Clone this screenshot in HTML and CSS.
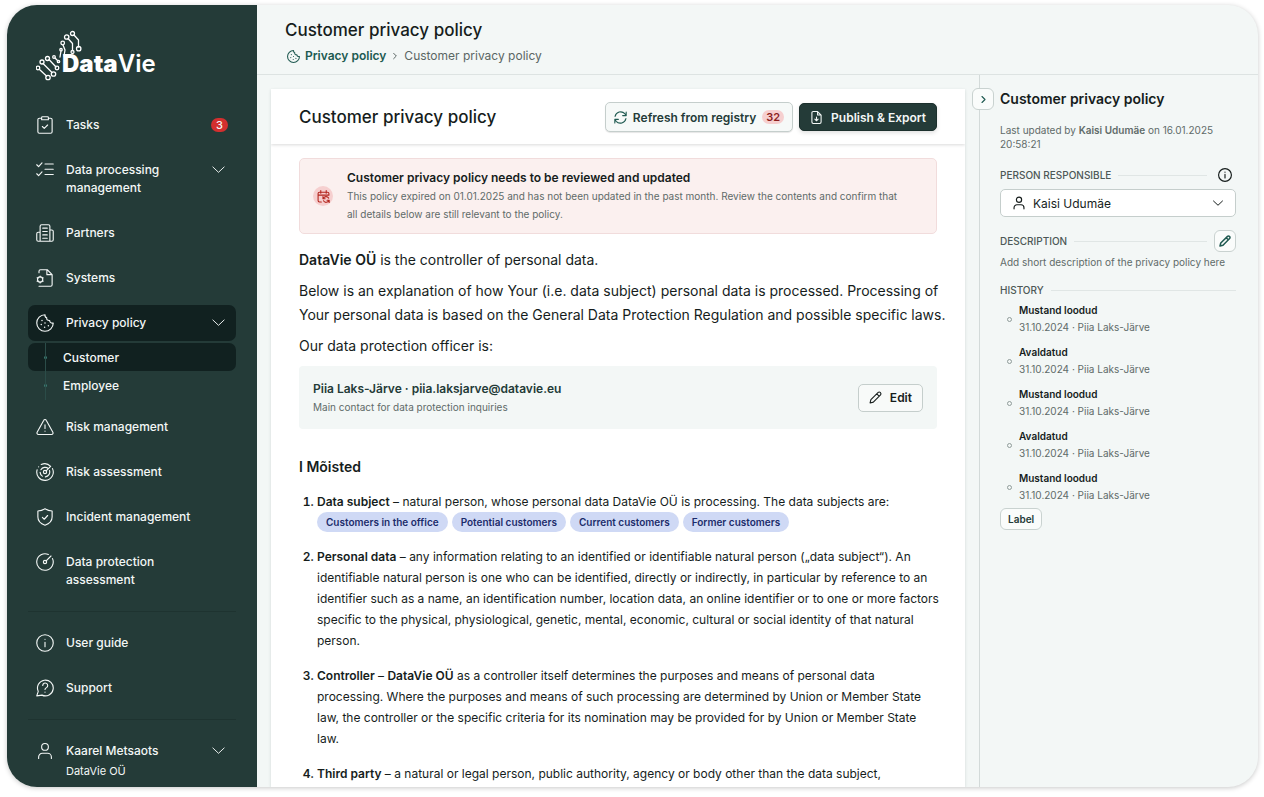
FILE: index.html
```html
<!DOCTYPE html>
<html lang="en">
<head>
    <meta charset="utf-8">
    <title>DataVie - Customer privacy policy</title>
    <link rel="stylesheet" href="styles.css">
</head>
<body>
    <svg class="sprite" aria-hidden="true">
        <symbol id="chevron-down" viewBox="0 0 24 24"><path d="M3 8l9 8.5 9-8.5"/></symbol>
        <symbol id="chevron-right" viewBox="0 0 24 24"><path d="M8 4l8 8-8 8"/></symbol>
        <symbol id="user" viewBox="0 0 24 24"><circle cx="12" cy="6.5" r="4.5"/><path d="M3.5 22v-2a5 5 0 0 1 5-5h7a5 5 0 0 1 5 5v2"/></symbol>
        <symbol id="cookie" viewBox="0 0 24 24"><path d="M12 1a11 11 0 1 0 11 11c-2.5.6-4.8-.8-4.8-3.3-2.8.3-4.4-1.2-3.9-3.7C12.5 4.5 11.7 3 12 1z"/><path d="M8 8.5v.01M7 14v.01M12 12v.01M11.5 17.5v.01M16.5 15.5v.01" stroke-width="2"/></symbol>
        <symbol id="info" viewBox="0 0 24 24"><circle cx="12" cy="12" r="11"/><path d="M12 11v6M12 7v.1"/></symbol>
        <symbol id="pencil" viewBox="0 0 24 24"><path d="M2 22l1.5-6L17 2.7a2.6 2.6 0 0 1 3.7 0l.6.6a2.6 2.6 0 0 1 0 3.7L8 20.5zM14.5 5.5l4 4"/></symbol>
    </svg>

    <div class="app">
        <aside class="sidebar">
            <a href="#" class="logo" aria-label="DataVie">
                <svg width="122" height="52" viewBox="0 0 122 52">
                    <g class="logo-strand">
                        <path d="M3.5 39.5l7 6.5M7 33.5l9 9M13 29.5l7 7.5M19 28l3 3M27 15l2 5-1 6M32 8.5l4.5 5v7M38 5l4.5 5v7M25 21l-1 6"/>
                        <circle cx="2" cy="38" r="1.8"/><circle cx="6" cy="32" r="2"/><circle cx="11.5" cy="28.5" r="2"/><circle cx="18" cy="27" r="1.3"/>
                        <circle cx="12" cy="47.5" r="2.2"/><circle cx="17.5" cy="44" r="2.2"/><circle cx="21" cy="38" r="1.8"/><circle cx="22.5" cy="31.5" r="1.2"/>
                        <circle cx="25" cy="19.7" r="1.2"/><circle cx="26.7" cy="13" r="1.8"/><circle cx="30.7" cy="7" r="2.2"/><circle cx="36.5" cy="3.5" r="2"/>
                        <circle cx="42.7" cy="18.7" r="2.2"/><circle cx="36.5" cy="22" r="1.5"/>
                    </g>
                    <text x="26" y="42" class="logo-text"><tspan class="logo-heavy">Data</tspan>Vie</text>
                </svg>
            </a>

            <nav class="menu">
                <a href="#" class="menu-item">
                    <svg class="icon" viewBox="0 0 24 24"><path d="M7.5 3H4.5a2 2 0 0 0-2 2v16a2 2 0 0 0 2 2h15a2 2 0 0 0 2-2V5a2 2 0 0 0-2-2h-3M8.5 1h7a1 1 0 0 1 1 1v3h-9V2a1 1 0 0 1 1-1zM8.5 14l2.5 2.5 4.5-4.5"/></svg>
                    <span>Tasks</span>
                    <span class="count">3</span>
                </a>
                <a href="#" class="menu-item">
                    <svg class="icon" viewBox="0 0 24 24"><path d="M1 5l2.5 2.5L8 2.5M1 17l2.5 2.5L8 14.5M12 4h11M12 11h11M12 18h11"/></svg>
                    <span>Data processing management</span>
                    <svg class="arrow"><use href="#chevron-down"/></svg>
                </a>
                <a href="#" class="menu-item">
                    <svg class="icon" viewBox="0 0 24 24"><path d="M5.5 23V3a2 2 0 0 1 2-2h9a2 2 0 0 1 2 2v20zM5.5 11H3a2 2 0 0 0-2 2v8a2 2 0 0 0 2 2h2.5M18.5 8H21a2 2 0 0 1 2 2v11a2 2 0 0 1-2 2h-2.5M9 5.5h6M9 10h6M9 14.5h6M9 19h6"/></svg>
                    <span>Partners</span>
                </a>
                <a href="#" class="menu-item">
                    <svg class="icon" viewBox="0 0 24 24"><path d="M4 5V3a2 2 0 0 1 2-2h9l6.5 6.5V21a2 2 0 0 1-2 2H4M14.5 1v6.5h7"/><circle cx="5.5" cy="14" r="3.5"/><path d="M5.5 9.5v1M5.5 17.5v1M1.5 11.7l1 .6M8.5 15.7l1 .6M1.5 16.3l1-.6M8.5 12.3l1-.6"/></svg>
                    <span>Systems</span>
                </a>
                <div class="menu-group">
                    <a href="#" class="menu-item active">
                        <svg class="icon"><use href="#cookie"/></svg>
                        <span>Privacy policy</span>
                        <svg class="arrow"><use href="#chevron-down"/></svg>
                    </a>
                    <div class="submenu">
                        <a href="#" class="submenu-item active">Customer</a>
                        <a href="#" class="submenu-item">Employee</a>
                    </div>
                </div>
                <a href="#" class="menu-item">
                    <svg class="icon" viewBox="0 0 24 24"><path d="M10.2 3.2L1.5 19a2 2 0 0 0 1.8 3h17.4a2 2 0 0 0 1.8-3L13.8 3.2a2 2 0 0 0-3.6 0zM12 9v5M12 17.5v.1"/></svg>
                    <span>Risk management</span>
                </a>
                <a href="#" class="menu-item">
                    <svg class="icon" viewBox="0 0 24 24"><path d="M19.5 4.5A11 11 0 0 0 7 2M3.5 5v.1M1.5 9a11 11 0 1 0 20.5-1.5M16.5 7.5A6.5 6.5 0 0 0 6.5 9M5.5 12.5a6.5 6.5 0 0 0 3 5M12.5 18.5a6.5 6.5 0 0 0 5.5-8.5M13.5 10.5l6-6"/><circle cx="12" cy="12" r="2.2"/></svg>
                    <span>Risk assessment</span>
                </a>
                <a href="#" class="menu-item">
                    <svg class="icon" viewBox="0 0 24 24"><path d="M12 1c3 2 6 3 9.5 3v8c0 5.5-4 9-9.5 11-5.5-2-9.5-5.5-9.5-11V4C6 4 9 3 12 1zM8.5 12.5l2.5 2.5 4.5-5"/></svg>
                    <span>Incident management</span>
                </a>
                <a href="#" class="menu-item">
                    <svg class="icon" viewBox="0 0 24 24"><path d="M16.5 2a11 11 0 1 0 5.5 5.5M13.5 10.5L20 4"/><circle cx="12" cy="12" r="2.2"/></svg>
                    <span>Data protection assessment</span>
                </a>
                <hr class="divider">
                <a href="#" class="menu-item">
                    <svg class="icon"><use href="#info"/></svg>
                    <span>User guide</span>
                </a>
                <a href="#" class="menu-item">
                    <svg class="icon" viewBox="0 0 24 24"><path d="M1 22.5l2-6A10.5 10.5 0 1 1 8 21.5zM9 8.5a3.3 3.3 0 1 1 5 3c-1.5.8-2 1.3-2 2.5M12 17.5v.1"/></svg>
                    <span>Support</span>
                </a>
                <hr class="divider">
                <a href="#" class="menu-item">
                    <svg class="icon"><use href="#user"/></svg>
                    <span>Kaarel Metsaots <small class="company">DataVie OÜ</small></span>
                    <svg class="arrow"><use href="#chevron-down"/></svg>
                </a>
            </nav>
        </aside>

        <div class="page">
            <header class="page-header">
                <h1 class="title">Customer privacy policy</h1>
                <nav class="breadcrumb">
                    <svg class="icon-sm"><use href="#cookie"/></svg>
                    <a href="#">Privacy policy</a>
                    <svg class="separator"><use href="#chevron-right"/></svg>
                    <span>Customer privacy policy</span>
                </nav>
            </header>

            <div class="columns">
                <main class="document">
                    <div class="document-header">
                        <h2 class="title">Customer privacy policy</h2>
                        <button class="btn btn-light">
                            <svg class="icon-sm" viewBox="0 0 24 24"><path d="M22.5 2v6.5H16M1.5 22v-6.5H8M2 10A10.5 10.5 0 0 1 20 5l2.5 3.5M1.5 15.5L4 19a10.5 10.5 0 0 0 18-5"/></svg>
                            Refresh from registry
                            <span class="badge">32</span>
                        </button>
                        <button class="btn btn-dark">
                            <svg class="icon-sm" viewBox="0 0 24 24"><path d="M14 1H6a2.5 2.5 0 0 0-2.5 2.5v17A2.5 2.5 0 0 0 6 23h12a2.5 2.5 0 0 0 2.5-2.5v-13zM14 1v6.5h6.5M12 11v7M9 15l3 3 3-3"/></svg>
                            Publish &amp; Export
                        </button>
                    </div>

                    <div class="document-body">
                        <div class="alert">
                            <span class="alert-icon">
                                <svg viewBox="0 0 24 24"><path d="M8 22H4.5A2.5 2.5 0 0 1 2 19.5v-13A2.5 2.5 0 0 1 4.5 4h15A2.5 2.5 0 0 1 22 6.5V9M2 9.5h20M7 1v5M17 1v5M11 12v4h4M22.5 23v-4h-4M11.5 16a5.5 5.5 0 0 1 10-1M22 19a5.5 5.5 0 0 1-10 1"/></svg>
                            </span>
                            <div>
                                <h3 class="alert-title">Customer privacy policy needs to be reviewed and updated</h3>
                                <p class="alert-text">This policy expired on 01.01.2025 and has not been updated in the past month. Review the contents and confirm that all details below are still relevant to the policy.</p>
                            </div>
                        </div>

                        <div class="intro">
                            <p><b>DataVie OÜ</b> is the controller of personal data.</p>
                            <p>Below is an explanation of how Your (i.e. data subject) personal data is processed. Processing of Your personal data is based on the General Data Protection Regulation and possible specific laws.</p>
                            <p>Our data protection officer is:</p>
                        </div>

                        <div class="officer">
                            <div>
                                <div class="officer-name">Piia Laks-Järve · piia.laksjarve@datavie.eu</div>
                                <div class="officer-note">Main contact for data protection inquiries</div>
                            </div>
                            <button class="btn btn-outline">
                                <svg class="icon-sm"><use href="#pencil"/></svg>
                                Edit
                            </button>
                        </div>

                        <h3 class="section-title">I Mõisted</h3>
                        <ol class="terms">
                            <li>
                                <b>Data subject</b> – natural person, whose personal data DataVie OÜ is processing. The data subjects are:
                                <div class="tags">
                                    <span class="tag">Customers in the office</span>
                                    <span class="tag">Potential customers</span>
                                    <span class="tag">Current customers</span>
                                    <span class="tag">Former customers</span>
                                </div>
                            </li>
                            <li><b>Personal data</b> – any information relating to an identified or identifiable natural person („data subject“). An identifiable natural person is one who can be identified, directly or indirectly, in particular by reference to an identifier such as a name, an identification number, location data, an online identifier or to one or more factors specific to the physical, physiological, genetic, mental, economic, cultural or social identity of that natural person.</li>
                            <li><b>Controller</b> – <b>DataVie OÜ</b> as a controller itself determines the purposes and means of personal data processing. Where the purposes and means of such processing are determined by Union or Member State law, the controller or the specific criteria for its nomination may be provided for by Union or Member State law.</li>
                            <li><b>Third party</b> – a natural or legal person, public authority, agency or body other than the data subject,</li>
                        </ol>
                    </div>
                </main>

                <aside class="details">
                    <button class="btn-icon collapse" aria-label="Collapse"><svg><use href="#chevron-right"/></svg></button>
                    <h2 class="details-title">Customer privacy policy</h2>
                    <p class="updated">Last updated by <b>Kaisi Udumäe</b> on 16.01.2025 20:58:21</p>

                    <div class="label-row">
                        <label for="person">PERSON RESPONSIBLE</label>
                        <button class="info-btn" aria-label="Info"><svg><use href="#info"/></svg></button>
                    </div>
                    <div class="select-box">
                        <svg><use href="#user"/></svg>
                        <select id="person"><option>Kaisi Udumäe</option></select>
                        <svg class="select-arrow"><use href="#chevron-down"/></svg>
                    </div>

                    <div class="label-row">
                        <span>DESCRIPTION</span>
                        <button class="btn-icon" aria-label="Edit description"><svg><use href="#pencil"/></svg></button>
                    </div>
                    <p class="description">Add short description of the privacy policy here</p>

                    <div class="label-row history-label"><span>HISTORY</span></div>
                    <ul class="history">
                        <li><b>Mustand loodud</b><span>31.10.2024 · Piia Laks-Järve</span></li>
                        <li><b>Avaldatud</b><span>31.10.2024 · Piia Laks-Järve</span></li>
                        <li><b>Mustand loodud</b><span>31.10.2024 · Piia Laks-Järve</span></li>
                        <li><b>Avaldatud</b><span>31.10.2024 · Piia Laks-Järve</span></li>
                        <li><b>Mustand loodud</b><span>31.10.2024 · Piia Laks-Järve</span></li>
                    </ul>
                    <button class="label-btn">Label</button>
                </aside>
            </div>
        </div>
    </div>
</body>
</html>
```
FILE: styles.css
```css
*, *::before, *::after {
    box-sizing: border-box;
}
body {
    margin: 0;
    padding: 5px 6px 10px 7px;
    height: 100vh;
    background: #fff;
    color: #161d1c;
    font-family: Inter, "Liberation Sans", sans-serif;
    font-size: 12px;
}
h1, h2, h3, p, ul, ol {
    margin: 0;
    padding: 0;
}
b {
    font-weight: 600;
}
a {
    color: inherit;
    text-decoration: none;
}
button, select {
    font: inherit;
    color: inherit;
    cursor: pointer;
}
svg {
    fill: none;
    stroke: currentColor;
    stroke-width: 1.5;
    stroke-linecap: round;
    stroke-linejoin: round;
    flex-shrink: 0;
}
.sprite {
    display: none;
}
.app {
    display: flex;
    height: 100%;
    border-radius: 30px;
    overflow: hidden;
    background: #f3f7f6;
    box-shadow: 0 1px 5px rgba(0, 0, 0, 0.22);
}

/* sidebar */
.sidebar {
    width: 250px;
    flex-shrink: 0;
    padding: 25px 21px 0;
    background: #243b38;
    color: #f3f7f6;
}
.logo {
    display: block;
    height: 52px;
    margin: 0 0 25px 8px;
    color: #fff;
}
.logo-strand {
    stroke-width: 1.3;
}
.logo-text {
    fill: currentColor;
    stroke: none;
    font-size: 24px;
    font-weight: 600;
}
.logo-heavy {
    font-weight: 900;
}
.menu {
    display: flex;
    flex-direction: column;
    gap: 9px;
}
.menu-item {
    display: flex;
    align-items: flex-start;
    gap: 12px;
    padding: 9px 8px;
    border-radius: 7px;
    font-size: 12px;
    font-weight: 500;
    line-height: 18px;
}
.menu-item span {
    max-width: 130px;
}
.menu-item.active, .submenu-item.active {
    background: #112120;
}
.icon {
    width: 18px;
    height: 18px;
}
.arrow {
    width: 15px;
    height: 15px;
    margin: 1px 2px 0 auto;
}
.menu-item .count {
    margin: 2px 0 0 auto;
    padding: 0 5px;
    border-radius: 7px;
    background: #d32f2f;
    font-size: 11px;
    line-height: 14px;
}
.submenu {
    position: relative;
    margin-top: 2px;
    padding-bottom: 1px;
}
.submenu::before {
    content: "";
    position: absolute;
    left: 17px;
    top: 0;
    bottom: 0;
    width: 1px;
    background: #2b4c48;
}
.submenu-item {
    display: flex;
    align-items: center;
    gap: 16px;
    height: 28px;
    padding-left: 16px;
    border-radius: 7px;
    font-weight: 500;
}
.submenu-item::before {
    content: "";
    width: 3px;
    height: 3px;
    border-radius: 50%;
    background: #3b8076;
}
.divider {
    width: 100%;
    margin: 4px 0;
    border: 0;
    border-top: 1px solid #1e3330;
}
.company {
    display: block;
    margin-top: 2px;
    font-size: 11px;
    font-weight: 400;
}

/* page */
.page {
    flex: 1;
    min-width: 0;
    display: flex;
    flex-direction: column;
}
.page-header {
    padding: 13px 28px 9px;
    border-bottom: 1px solid #dde3e2;
}
.title {
    font-size: 17px;
    font-weight: 500;
    line-height: 24px;
}
.breadcrumb {
    display: flex;
    align-items: center;
    gap: 5px;
    margin-top: 5px;
    padding-left: 2px;
    line-height: 18px;
    color: #5a6664;
}
.breadcrumb a, .breadcrumb .icon-sm {
    color: #205a51;
    font-weight: 600;
}
.icon-sm {
    width: 13px;
    height: 13px;
    stroke-width: 2;
}
.separator {
    width: 8px;
    height: 8px;
    stroke-width: 3;
}
.columns {
    flex: 1;
    min-height: 0;
    display: flex;
}
.document {
    flex: 1;
    min-width: 0;
    margin: 14px 14px 0;
    background: #fff;
    box-shadow: 0 1px 3px rgba(20, 50, 45, 0.15);
    overflow: hidden;
}
.document-header {
    display: flex;
    align-items: center;
    gap: 6px;
    padding: 13px 28px 12px;
    box-shadow: 0 1px 3px rgba(0, 0, 0, 0.15);
}
.document-header .title {
    margin-right: auto;
}
.btn {
    display: flex;
    align-items: center;
    gap: 8px;
    height: 28px;
    padding: 0 10px;
    border: 1px solid #c5cecc;
    border-radius: 5px;
    font-size: 12px;
    font-weight: 600;
    white-space: nowrap;
}
.btn-light {
    gap: 6px;
    height: 30px;
    padding: 0 8px;
    background: #f6f9f8;
    color: #243b38;
    box-shadow: 0 1px 1px rgba(0, 0, 0, 0.1);
}
.btn-light .icon-sm {
    color: #205a51;
}
.btn-dark {
    background: #243b38;
    border-color: #1c302d;
    color: #f3f7f6;
    box-shadow: 0 2px 4px rgba(0, 0, 0, 0.12);
}
.btn-outline {
    background: #f8faf9;
}
.badge {
    padding: 0 4px;
    border-radius: 7px;
    background: #f6cfcf;
    color: #8c1d1d;
    font-size: 11px;
    line-height: 14px;
}
.document-body {
    padding: 14px 28px 0;
    font-size: 14px;
    line-height: 24px;
}
.intro {
    display: flex;
    flex-direction: column;
    gap: 7px;
    margin-right: -10px;
}
.alert {
    display: flex;
    align-items: center;
    gap: 14px;
    margin-bottom: 14px;
    padding: 10px 28px 10px 13px;
    border: 1px solid #f1dcdc;
    border-radius: 5px;
    background: #fbf0ef;
}
.alert-icon {
    display: flex;
    align-items: center;
    justify-content: center;
    width: 20px;
    height: 20px;
    flex-shrink: 0;
    border-radius: 50%;
    background: #f6cfcf;
    color: #b3261e;
}
.alert-icon svg {
    width: 13px;
    height: 13px;
    stroke-width: 2;
}
.alert-title {
    font-size: 12px;
    font-weight: 600;
    line-height: 18px;
}
.alert-text {
    color: #5f6b69;
    font-size: 10px;
    line-height: 18px;
}
.officer {
    display: flex;
    align-items: center;
    justify-content: space-between;
    margin-top: 8px;
    padding: 13px 14px;
    border-radius: 4px;
    background: #f3f7f6;
}
.officer-name {
    color: #243b38;
    font-size: 12px;
    font-weight: 600;
    line-height: 20px;
}
.officer-note {
    color: #5f6b69;
    font-size: 10px;
    line-height: 17px;
}
.section-title {
    margin: 26px 0 12px;
    font-size: 14px;
    font-weight: 600;
    line-height: 24px;
}
.terms {
    margin-right: -3px;
    padding-left: 18px;
    font-size: 12px;
    line-height: 21px;
}
.terms li {
    margin-bottom: 14px;
}
.terms li::marker {
    font-weight: 600;
}
.tags {
    display: flex;
    gap: 4px;
}
.tag {
    padding: 0 9px;
    border-radius: 10px;
    background: #cfd9f5;
    color: #1c2c6b;
    font-size: 10px;
    font-weight: 600;
    line-height: 20px;
}

/* details panel */
.details {
    position: relative;
    width: 279px;
    flex-shrink: 0;
    padding: 14px 22px 0 20px;
    border-left: 1px solid #d3dad9;
}
.btn-icon {
    display: flex;
    align-items: center;
    justify-content: center;
    width: 22px;
    height: 22px;
    padding: 0;
    border: 1px solid #c9d2d0;
    border-radius: 6px;
    background: #fafcfb;
    color: #205a51;
}
.btn-icon svg {
    width: 12px;
    height: 12px;
    stroke-width: 3;
}
.collapse {
    position: absolute;
    left: -8px;
    top: 13px;
}
.collapse svg {
    width: 9px;
    height: 9px;
}
.details-title {
    font-size: 14px;
    font-weight: 600;
    line-height: 20px;
}
.updated {
    margin-top: 14px;
    color: #5f6b69;
    font-size: 10px;
    line-height: 14px;
}
.label-row {
    display: flex;
    align-items: center;
    gap: 7px;
    height: 22px;
    margin-top: 13px;
    color: #4d5856;
    font-size: 10px;
    font-weight: 500;
}
.label-row::after {
    content: "";
    flex: 1;
    height: 1px;
    background: #e0e6e5;
}
.label-row button {
    order: 1;
}
.info-btn {
    display: flex;
    width: 22px;
    padding: 0 4px;
    border: 0;
    background: none;
    color: #161d1c;
}
.info-btn svg {
    width: 14px;
    height: 14px;
    stroke-width: 2;
}
.select-box {
    display: flex;
    align-items: center;
    height: 28px;
    margin-top: 3px;
    padding: 0 11px;
    border: 1px solid #c5cecc;
    border-radius: 5px;
    background: #fff;
}
.select-box svg {
    width: 14px;
    height: 14px;
    stroke-width: 2;
}
.select-box select {
    flex: 1;
    margin-left: 7px;
    border: 0;
    background: none;
    appearance: none;
}
.select-box .select-arrow {
    width: 12px;
    height: 12px;
}
.description {
    color: #5f6b69;
    font-size: 10px;
    line-height: 20px;
}
.history-label {
    margin-top: 7px;
}
.history {
    display: flex;
    flex-direction: column;
    gap: 8px;
    padding-top: 1px;
    list-style: none;
}
.history li {
    display: grid;
    grid-template-columns: 5px 1fr;
    column-gap: 7px;
    align-items: center;
    padding-left: 7px;
    font-size: 10px;
    line-height: 17px;
}
.history li::before {
    content: "";
    grid-row: span 2;
    width: 5px;
    height: 5px;
    border: 1px solid #909c9a;
    border-radius: 50%;
}
.history b {
    grid-column: 2;
}
.history span {
    grid-column: 2;
    color: #5f6b69;
}
.label-btn {
    height: 22px;
    margin-top: 4px;
    padding: 0 7px;
    border: 1px solid #c9d2d0;
    border-radius: 6px;
    background: #fafcfb;
    color: #243b38;
    font-size: 10px;
    font-weight: 600;
}
```
